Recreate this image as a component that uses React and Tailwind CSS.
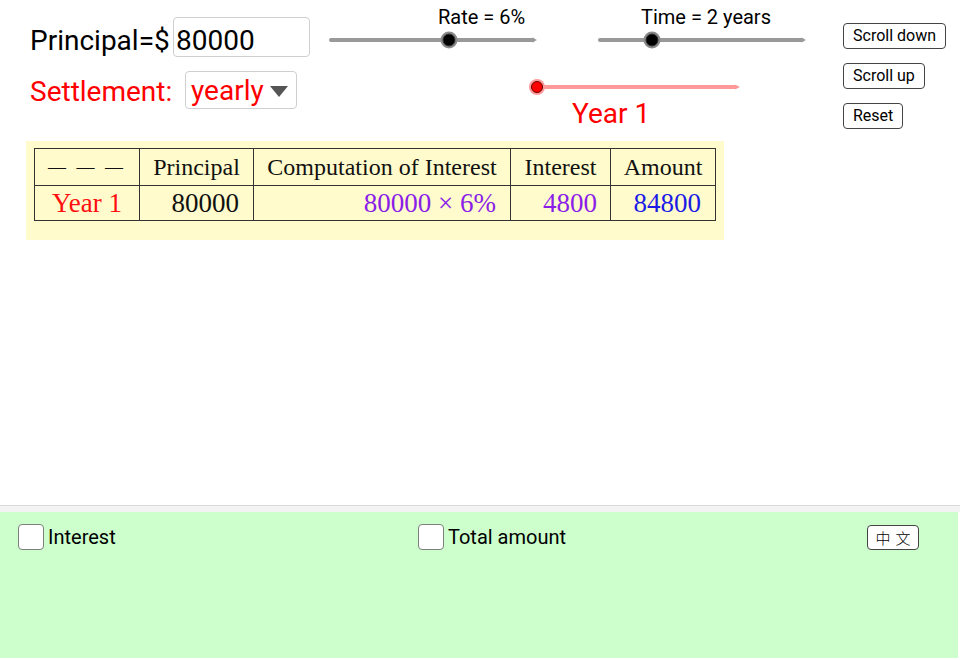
import React from "react";

const sans = { fontFamily: "Roboto, 'Liberation Sans', sans-serif" };

// GeoGebra-style slider drawn as svg: track with arrow tip, knob at `at`
function SliderTrack({ width, at, track, knob, halo, ring }) {
  const end = width + 1;
  return (
    <svg width={width + 10} height="24" className="block">
      <line x1="4" y1="12" x2={end} y2="12" stroke={track} strokeWidth="4" strokeLinecap="round" />
      <polygon points={`${end - 1},9.5 ${end + 4},12 ${end - 1},14.5`} fill={track} />
      <circle cx={at + 4} cy="12" r="8.5" fill={halo} />
      <circle cx={at + 4} cy="12" r="6" fill={knob} stroke={ring} strokeWidth="1" />
    </svg>
  );
}

function TopButton({ children }) {
  return (
    <button
      className="h-[26px] rounded-[4px] border border-[#444] bg-white px-[9px] text-[16px] leading-none text-black"
      style={sans}
    >
      {children}
    </button>
  );
}

function CheckItem({ label, width }) {
  return (
    <div className={`flex items-center gap-[4px] ${width}`}>
      <span className="h-[26px] w-[26px] rounded-[4px] border border-[#7a7f7a] bg-white" />
      <span className="text-[20px] leading-none text-black" style={sans}>
        {label}
      </span>
    </div>
  );
}

export default function App() {
  return (
    <div className="flex h-[660px] w-[960px] flex-col overflow-hidden bg-white">
      {/* graphics view 1 */}
      <div className="h-[505px]">
        <div className="flex h-[141px]">
          <div className="w-[843px]" style={sans}>
            {/* row 1 */}
            <div className="flex items-start pl-[30px]">
              <div className="mt-[17px] h-[40px] w-[143px] pt-[3px] text-[28px] leading-normal text-black">
                Principal=$
              </div>
              <div className="mt-[17px] h-[40px] w-[137px] rounded-[4px] border border-[#cfcfcf] pl-[2px] pt-[2px] text-[28px] leading-normal text-black">
                80000
              </div>
              <div className="ml-[17px] mt-[6px] flex w-[215px] flex-col">
                <div className="ml-[111px] h-[22px] text-[20px] leading-[22px] text-black">Rate = 6%</div>
                <SliderTrack width={205} at={118} track="#999999" knob="#000000" halo="#8a8a8a" ring="#333" />
              </div>
              <div className="ml-[54px] mt-[6px] flex w-[215px] flex-col">
                <div className="ml-[45px] h-[22px] text-[20px] leading-[22px] text-black">Time = 2 years</div>
                <SliderTrack width={205} at={52} track="#999999" knob="#000000" halo="#8a8a8a" ring="#333" />
              </div>
            </div>
            {/* row 2 */}
            <div className="mt-[14px] flex items-start pl-[30px]">
              <div className="h-[38px] w-[155px] text-[28px] leading-normal text-[#ff0000]">
                Settlement:
              </div>
              <div className="flex h-[38px] w-[112px] items-start rounded-[4px] border border-[#cfcfcf] pl-[5px]">
                <span className="-mt-[2px] text-[28px] leading-normal text-[#ff0000]">yearly</span>
                <svg width="18" height="12" className="ml-[6px] mt-[14px]">
                  <polygon points="0,0 18,0 9,11" fill="#555" />
                </svg>
              </div>
              <div className="ml-[232px] mt-[4px] flex flex-col">
                <svg width="215" height="24" className="block">
                  <line x1="8" y1="12" x2="207" y2="12" stroke="#ff9999" strokeWidth="4" />
                  <polygon points="206,9.5 211,12 206,14.5" fill="#ff9999" />
                  <circle cx="8" cy="12" r="8" fill="#ff9a9a" />
                  <circle cx="8" cy="12" r="5.5" fill="#ff0000" stroke="#660000" strokeWidth="1" />
                </svg>
                <div className="-mt-[6px] ml-[43px] text-[28px] leading-normal text-[#ff0000]">Year 1</div>
              </div>
            </div>
          </div>
          <div className="flex flex-col items-start gap-[14px] pt-[23px]">
            <TopButton>Scroll down</TopButton>
            <TopButton>Scroll up</TopButton>
            <TopButton>Reset</TopButton>
          </div>
        </div>

        {/* table */}
        <div
          className="ml-[26px] h-[99px] w-[698px] bg-[#fffbcc] pl-[8px] pt-[7px]"
          style={{ fontFamily: "'Liberation Serif', 'Times New Roman', serif" }}
        >
          <table className="w-[681px] table-fixed border-collapse">
            <colgroup>
              <col className="w-[105px]" />
              <col className="w-[114px]" />
              <col className="w-[257px]" />
              <col className="w-[100px]" />
              <col className="w-[105px]" />
            </colgroup>
            <tbody>
              <tr className="h-[37px] text-[24px] leading-none text-[#111]">
                <td className="border border-[#333] text-center text-[18px] tracking-[3px]">—&nbsp;—&nbsp;—</td>
                <td className="border border-[#333] text-center">Principal</td>
                <td className="border border-[#333] text-center">Computation of Interest</td>
                <td className="border border-[#333] text-center">Interest</td>
                <td className="border border-[#333] text-center">Amount</td>
              </tr>
              <tr className="h-[35px] text-[27px] leading-none">
                <td className="border border-[#333] text-center text-[#ff1010]">Year 1</td>
                <td className="border border-[#333] pr-[14px] text-right text-[#111]">80000</td>
                <td className="border border-[#333] pr-[14px] text-right text-[#8a1ee8]">80000 × 6%</td>
                <td className="border border-[#333] pr-[13px] text-right text-[#8a1ee8]">4800</td>
                <td className="border border-[#333] pr-[14px] text-right text-[#1c1ce6]">84800</td>
              </tr>
            </tbody>
          </table>
        </div>
      </div>

      {/* divider */}
      <div className="h-[7px] border-t border-[#d9d9d9] bg-[#f3f3f3]" />

      {/* graphics view 2 */}
      <div className="flex h-[146px] w-[958px] items-start bg-[#ccffcc] pl-[18px] pt-[12px]">
        <CheckItem label="Interest" width="w-[400px]" />
        <CheckItem label="Total amount" width="w-[449px]" />
        <button
          className="mt-[1px] h-[25px] w-[52px] rounded-[4px] border border-[#444] bg-white pl-[5px] text-[15px] leading-none tracking-[5px] text-black"
          style={{ fontFamily: "'Noto Sans CJK TC', sans-serif", fontWeight: 300 }}
        >
          中文
        </button>
      </div>
    </div>
  );
}
